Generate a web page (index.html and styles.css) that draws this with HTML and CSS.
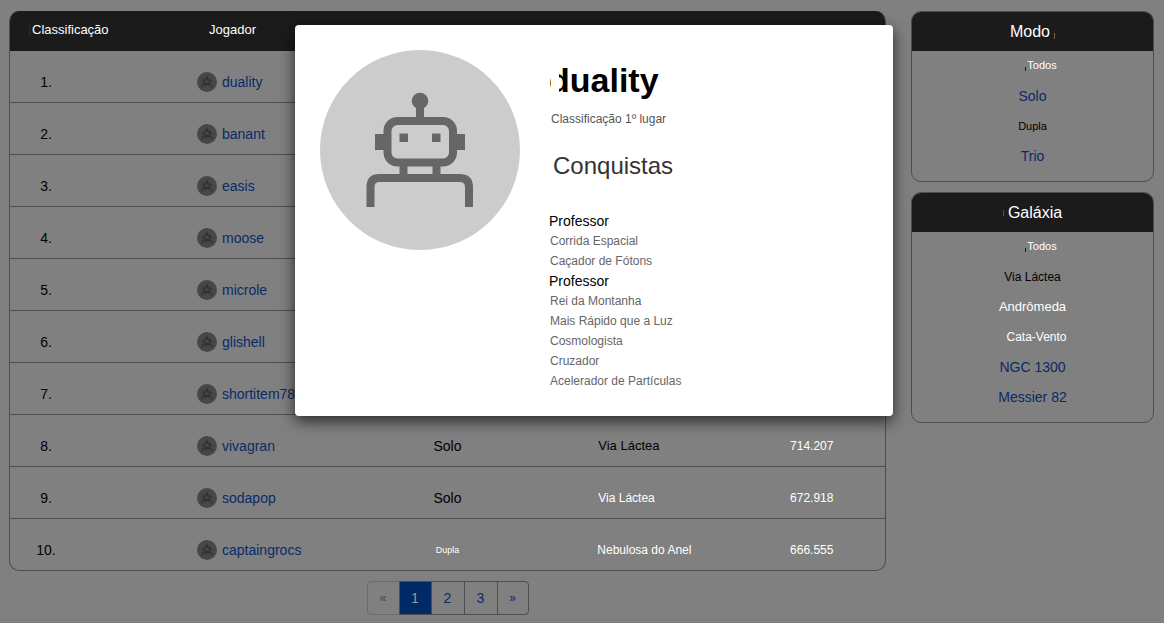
FILE: index.html
```html
<!DOCTYPE html>
<html lang="pt-BR">
<head>
<meta charset="utf-8">
<meta name="viewport" content="width=device-width, initial-scale=1">
<title>Classificação</title>
<link rel="stylesheet" href="styles.css">
</head>
<body>
<svg class="defs" aria-hidden="true">
  <symbol id="robot" viewBox="0 0 200 200">
    <circle cx="100" cy="100" r="100" class="robot-bg"/>
    <g class="robot-line">
      <path d="M100 56V70"/>
      <rect x="67.500" y="71" width="65.500" height="41.500" rx="10"/>
      <path d="M83.500 112V128M116.500 112V128"/>
      <path d="M50.500 157V137Q50.500 128 59.500 128H139.500Q149 128 149 137V157"/>
    </g>
    <g class="robot-fill">
      <circle cx="100" cy="51" r="8.300"/>
      <path d="M55 84H65V100H55ZM135 84H145V100H135ZM79.500 83.500H88V92H79.500ZM112 83.500H120.500V92H112Z"/>
    </g>
  </symbol>
</svg>
<div class="page">
  <main>
    <table class="board">
      <colgroup><col class="c-rank"><col class="c-player"><col class="c-mode"><col class="c-galaxy"><col class="c-score"></colgroup>
      <thead><tr><th class="rank-head"><i class="tick blue"></i>Classificação</th><th class="player-head">Jogador</th><th></th><th></th><th></th></tr></thead>
      <tbody>
        <tr><td><span class="rank">1.</span></td><td class="player"><a href="#"><svg class="mini"><use href="#robot"/></svg>duality</a></td><td></td><td></td><td></td></tr>
        <tr><td><span class="rank">2.</span></td><td class="player"><a href="#"><svg class="mini"><use href="#robot"/></svg>banant</a></td><td></td><td></td><td></td></tr>
        <tr><td><span class="rank">3.</span></td><td class="player"><a href="#"><svg class="mini"><use href="#robot"/></svg>easis</a></td><td></td><td></td><td></td></tr>
        <tr><td><span class="rank">4.</span></td><td class="player"><a href="#"><svg class="mini"><use href="#robot"/></svg>moose</a></td><td></td><td></td><td></td></tr>
        <tr><td><span class="rank">5.</span></td><td class="player"><a href="#"><svg class="mini"><use href="#robot"/></svg>microle</a></td><td></td><td></td><td></td></tr>
        <tr><td><span class="rank">6.</span></td><td class="player"><a href="#"><svg class="mini"><use href="#robot"/></svg>glishell</a></td><td></td><td></td><td></td></tr>
        <tr><td><span class="rank">7.</span></td><td class="player"><a href="#"><svg class="mini"><use href="#robot"/></svg>shortitem78</a></td><td></td><td></td><td></td></tr>
        <tr><td><span class="rank">8.</span></td><td class="player"><a href="#"><svg class="mini"><use href="#robot"/></svg>vivagran</a></td><td class="mid">Solo</td><td class="galaxy t13">Via Láctea</td><td class="score">714.207</td></tr>
        <tr><td><span class="rank">9.</span></td><td class="player"><a href="#"><svg class="mini"><use href="#robot"/></svg>sodapop</a></td><td class="mid">Solo</td><td class="galaxy light t12">Via Láctea</td><td class="score">672.918</td></tr>
        <tr><td><span class="rank">10.</span></td><td class="player"><a href="#"><svg class="mini"><use href="#robot"/></svg>captaingrocs</a></td><td class="mid light t9">Dupla</td><td class="mid light t12">Nebulosa do Anel</td><td class="score">666.555</td></tr>
      </tbody>
    </table>
    <nav class="pager" aria-label="Páginas">
      <a href="#" class="off arrow">«</a><a href="#" class="on">1</a><a href="#">2</a><a href="#">3</a><a href="#" class="arrow">»</a>
    </nav>
  </main>
  <aside class="filters">
    <section class="panel">
      <h3>Modo<i class="tick tan"></i></h3>
      <ul>
        <li class="light t11 shifted"><a href="#"><i class="tick ink"></i>Todos</a></li>
        <li><a href="#">Solo</a></li>
        <li class="dark t11"><a href="#">Dupla</a></li>
        <li><a href="#">Trio</a></li>
      </ul>
    </section>
    <section class="panel">
      <h3><i class="tick steel"></i>Galáxia</h3>
      <ul>
        <li class="light t11 shifted"><a href="#"><i class="tick ink"></i>Todos</a></li>
        <li class="dark t12"><a href="#">Via Láctea</a></li>
        <li class="light t13"><a href="#">Andrômeda</a></li>
        <li class="light t12 nudge"><a href="#">Cata-Vento</a></li>
        <li><a href="#">NGC 1300</a></li>
        <li><a href="#">Messier 82</a></li>
      </ul>
    </section>
  </aside>
</div>
<div class="modal" role="dialog" aria-labelledby="player-name">
  <svg class="avatar"><use href="#robot"/></svg>
  <div class="profile">
    <h1 id="player-name">duality</h1>
    <p>Classificação 1º lugar</p>
    <h2>Conquistas</h2>
    <ul class="awards">
      <li class="strong">Professor</li>
      <li>Corrida Espacial</li>
      <li>Caçador de Fótons</li>
      <li class="strong">Professor</li>
      <li>Rei da Montanha</li>
      <li>Mais Rápido que a Luz</li>
      <li>Cosmologista</li>
      <li>Cruzador</li>
      <li>Acelerador de Partículas</li>
    </ul>
  </div>
</div>
</body>
</html>
```
FILE: styles.css
```css
* { box-sizing: border-box; }
body {
  margin: 0;
  background: #808080;
  color: #000;
  font: 14px/20px "Liberation Sans", Arial, sans-serif;
}
a { color: #0a2a66; text-decoration: none; }
ul, h1, h2, h3, p { margin: 0; padding: 0; list-style: none; font-weight: 400; }
.defs { position: absolute; width: 0; height: 0; }
.page {
  display: grid;
  grid-template-columns: minmax(0, 1fr) 243px;
  gap: 25px;
  padding: 11px 10px 8px 9px;
}

.board {
  width: 100%;
  table-layout: fixed;
  border-collapse: separate;
  border-spacing: 0;
  border: 1px solid #4d4d4d;
  border-top: 0;
  border-radius: 10px;
  overflow: hidden;
}
.c-rank { width: 20%; }
.c-player { width: 21%; }
.c-mode { width: 18%; }
.c-galaxy { width: 27%; }
.c-score { width: 14%; }
.board th {
  height: 40px;
  padding: 0 0 2px;
  background: #1b1b1b;
  color: #fff;
  font-size: 13px;
  font-weight: 400;
  text-align: left;
}
.board .rank-head { padding-left: 19px; }
.board .player-head { padding-left: 24px; }
.board td {
  height: 52px;
  padding: 10px 0 0;
  border-bottom: 1px solid #4d4d4d;
}
.board tbody tr:last-child td { height: 51px; border-bottom: 0; }
.rank { display: block; width: 72px; text-align: center; }
.board .player { padding-left: 12px; white-space: nowrap; }
.player a { display: flex; align-items: center; gap: 5px; }
.robot-bg { fill: var(--disc); }
.robot-line { fill: none; stroke: var(--robot); stroke-width: 8; }
.robot-fill { fill: var(--robot); }
.mini {
  --disc: #474747;
  --robot: #272727;
  width: 20px;
  height: 20px;
}
.board .mid { text-align: center; }
.board .galaxy { padding-left: 72px; }
.board .score {
  padding-right: 24px;
  color: #fff;
  font-size: 12px;
  text-align: center;
}
.light, .light a { color: #fff; }
.dark a { color: #000; }
.t9 { font-size: 9px; }
.t11 { font-size: 11px; }
.t12 { font-size: 12px; }
.t13 { font-size: 13px; }

.tick { display: inline-block; width: 1px; height: 10px; vertical-align: -2px; }
.blue { margin-right: 2px; background: #1c2c4a; }
.tan { height: 6px; margin-left: 4px; background: #7a5f50; }
.steel { height: 6px; margin-right: 4px; vertical-align: 2px; background: #3f5a78; }
.ink { height: 4px; margin-right: 1px; background: #2a1c10; }

.pager { display: flex; justify-content: center; margin-top: 10px; }
.pager a {
  width: 33px;
  height: 34px;
  margin-right: -1px;
  border: 1px solid #4d4d4d;
  line-height: 32px;
  text-align: center;
}
.pager a:nth-child(3) { width: 34px; }
.pager a:nth-child(4) { width: 34px; }
.pager .off { border-color: #6b6b6b; border-radius: 4px 0 0 4px; color: #444; }
.pager .on { background: #002a66; color: #999; }
.pager .arrow { font-size: 12px; }
.pager a:last-child { width: 32px; margin-right: 0; border-radius: 0 4px 4px 0; }

.filters { display: flex; flex-direction: column; gap: 10px; }
.panel {
  padding-bottom: 10px;
  border: 1px solid #4d4d4d;
  border-radius: 10px;
  overflow: hidden;
  text-align: center;
}
.panel h3 {
  height: 39px;
  background: #1b1b1b;
  color: #fff;
  font-size: 16px;
  line-height: 40px;
}
.panel li { height: 30px; line-height: 30px; }
.panel .shifted { padding-left: 17px; line-height: 28px; }
.panel .nudge { padding-left: 8px; }

.modal {
  position: absolute;
  top: 25px;
  left: 295px;
  display: flex;
  gap: 29px;
  width: 598px;
  padding: 25px;
  border-radius: 4px;
  background: #fff;
  box-shadow: 0 5px 15px rgba(0, 0, 0, .7);
}
.avatar {
  --disc: #ccc;
  --robot: #666;
  flex: none;
  width: 200px;
  height: 200px;
}
.profile { flex: 1; padding-top: 10px; }
.profile h1 {
  position: relative;
  font-size: 34px;
  font-weight: 700;
  line-height: 40px;
}
.profile h1::before {
  content: "";
  position: absolute;
  left: 2px;
  width: 8px;
  height: 40px;
  background: #fff;
}
.profile p { margin-top: 9px; padding-left: 2px; color: #555; font-size: 12px; }
.profile h2 {
  margin: 22px 0 30px;
  padding-left: 4px;
  color: #333;
  font-size: 24px;
  line-height: 30px;
}
.awards li { padding-left: 1px; color: #666; font-size: 12px; }
.awards .strong { padding-left: 0; color: #000; font-size: 14px; }
```
